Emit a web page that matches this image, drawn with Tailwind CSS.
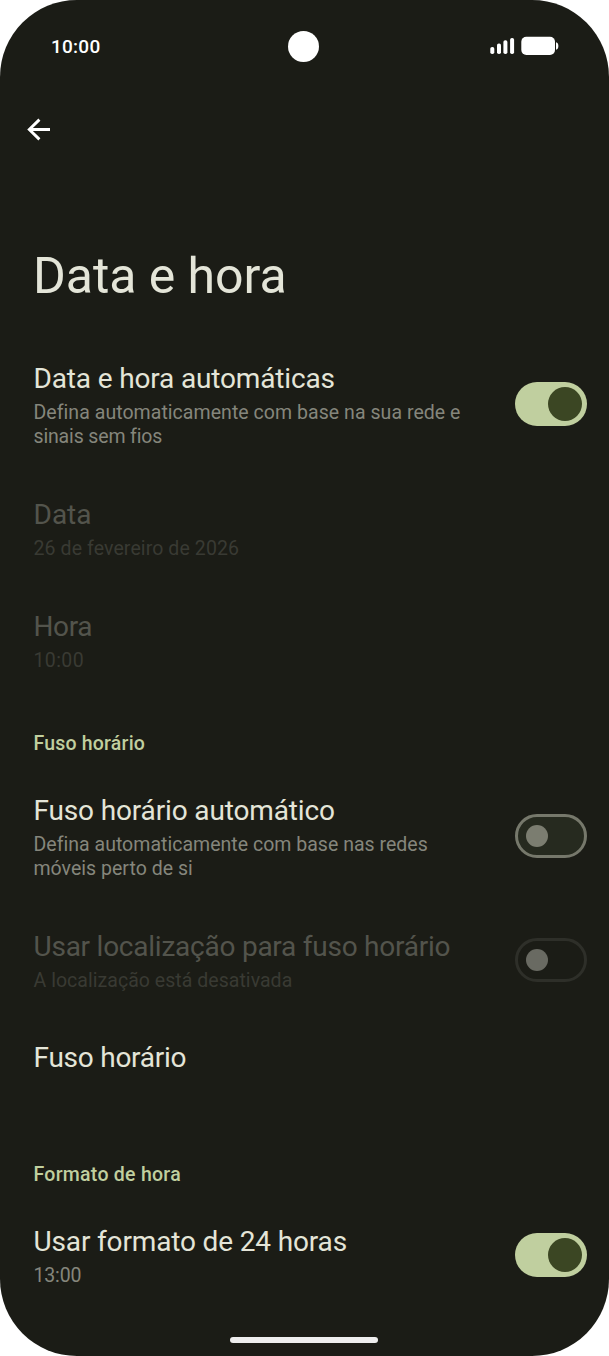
<!DOCTYPE html>
<html lang="pt">

<head>
    <meta charset="UTF-8">
    <meta name="viewport" content="width=device-width, initial-scale=1.0">
    <title>Data e hora</title>
    <script src="https://cdn.jsdelivr.net/npm/@tailwindcss/browser@4"></script>
</head>

<body class="bg-white overflow-hidden">
    <div class="w-[609px] h-[1356px] bg-[#1b1c16] rounded-[77px] overflow-hidden relative flex flex-col font-['Roboto',sans-serif] text-[#e4e5d8]">

        <!-- Status bar -->
        <div class="h-[92px] shrink-0 grid grid-cols-3 items-center pl-[50px] pr-[50px] text-white">
            <span class="text-[19px] leading-6 pt-px pl-px font-medium tracking-[0.25px]">10:00</span>
            <span class="size-[31px] rounded-full bg-white justify-self-center mt-px mr-px"></span>
            <svg class="justify-self-end" width="69" height="20" viewBox="0 0 69 20" fill="currentColor">
                <rect x="0.3" y="11" width="4" height="7" rx="1.8" />
                <rect x="7" y="7.5" width="4" height="10.5" rx="1.8" />
                <rect x="13.4" y="4.2" width="4" height="13.8" rx="1.8" />
                <rect x="20.1" y="2" width="4" height="16" rx="1.8" />
                <rect x="31.3" y="0.8" width="33.7" height="18.2" rx="5" />
                <path d="M66 6.2c1.6.5 2.4 1.9 2.4 3.8s-.8 3.300-2.400 3.800z" />
            </svg>
        </div>

        <!-- Back -->
        <div class="h-[74px] shrink-0 pl-[27px] pt-[26px]">
            <svg width="24" height="24" viewBox="0 0 24 24" fill="none" stroke="white" stroke-width="2.9">
                <path d="M23 11.500H2.500M12.400 1.600L2.300 11.500L12.400 21.400" />
            </svg>
        </div>

        <h1 class="h-[170.500px] shrink-0 pt-[80px] pl-[33px] text-[50px] leading-[60px] tracking-[-0.05px]">Data e hora</h1>

        <!-- Date and time -->
        <div class="h-[136px] shrink-0 flex items-center justify-between pl-[33.500px] pr-[22px]">
            <div class="pt-[2px]">
                <div class="text-[28px] leading-[34px] tracking-[-0.15px]">Data e hora automáticas</div>
                <div class="mt-[5px] text-[19.5px] leading-6 text-[#85867c]"><span class="tracking-[0.05px]">Defina automaticamente com base na sua rede e</span><br><span class="tracking-[-0.15px]">sinais sem fios</span></div>
            </div>
            <div class="w-[72px] h-11 mb-px rounded-full bg-[#c0cf9f] flex items-center justify-end pr-[5px]">
                <div class="size-[34px] rounded-full bg-[#3b4623]"></div>
            </div>
        </div>
        <div class="h-[112px] shrink-0 flex flex-col justify-center pt-[2px] pl-[33.500px]">
            <div class="text-[28px] leading-[34px] text-[#53544c]">Data</div>
            <div class="mt-[5px] text-[19.5px] leading-6 tracking-[0.1px] text-[#393a33]">26 de fevereiro de 2026</div>
        </div>
        <div class="h-[112px] shrink-0 flex flex-col justify-center pt-[2px] pl-[33.500px]">
            <div class="text-[28px] leading-[34px] tracking-[-0.4px] text-[#53544c]">Hora</div>
            <div class="mt-[5px] text-[19.5px] leading-6 tracking-[0.4px] text-[#393a33]">10:00</div>
        </div>

        <!-- Time zone -->
        <h2 class="h-[72px] shrink-0 pt-[35px] pl-[33.500px] text-[19.5px] leading-6 font-medium tracking-[0.2px] text-[#c0cf9f]">Fuso horário</h2>
        <div class="h-[136px] shrink-0 flex items-center justify-between pl-[33.500px] pr-[22px]">
            <div class="pt-[2px]">
                <div class="text-[28px] leading-[34px] tracking-[-0.15px]">Fuso horário automático</div>
                <div class="mt-[5px] text-[19.5px] leading-6 tracking-[0.02px] text-[#85867c]">Defina automaticamente com base nas redes<br>móveis perto de si</div>
            </div>
            <div class="w-[72px] h-11 mb-[2px] rounded-full bg-[#262a1f] border-[3px] border-[#76786b] flex items-center pl-2">
                <div class="size-[22px] rounded-full bg-[#7b7d70]"></div>
            </div>
        </div>
        <div class="h-[112px] shrink-0 flex items-center justify-between pl-[33.500px] pr-[22px]">
            <div class="pt-[2px]">
                <div class="text-[28px] leading-[34px] tracking-[-0.24px] text-[#53544c]">Usar localização para fuso horário</div>
                <div class="mt-[5px] text-[19.5px] leading-6 tracking-[0.04px] text-[#393a33]">A localização está desativada</div>
            </div>
            <div class="w-[72px] h-11 mb-[2px] rounded-full border-[3px] border-[#2e2f29] flex items-center pl-2">
                <div class="size-[22px] rounded-full bg-[#696a62]"></div>
            </div>
        </div>
        <div class="h-[111px] shrink-0 pt-[24px] pl-[33.500px]">
            <div class="text-[28px] leading-[34px] tracking-[-0.25px]">Fuso horário</div>
        </div>

        <!-- Time format -->
        <h2 class="h-[72px] shrink-0 pt-[35px] pl-[33.500px] text-[19.5px] leading-6 font-medium tracking-[0.27px] text-[#c0cf9f]">Formato de hora</h2>
        <div class="h-[112px] shrink-0 flex items-center justify-between pl-[33.500px] pr-[22px]">
            <div class="pt-[2px]">
                <div class="text-[28px] leading-[34px] tracking-[-0.15px]">Usar formato de 24 horas</div>
                <div class="mt-[5px] text-[19.5px] leading-6 tracking-[-0.15px] text-[#85867c]">13:00</div>
            </div>
            <div class="w-[72px] h-11 mb-[2px] rounded-full bg-[#c0cf9f] flex items-center justify-end pr-[5px]">
                <div class="size-[34px] rounded-full bg-[#3b4623]"></div>
            </div>
        </div>

        <!-- Gesture bar -->
        <div class="absolute bottom-[13.500px] left-[230px] w-[148px] h-[6px] rounded-full bg-[#eeeeee]"></div>
    </div>
</body>

</html>
